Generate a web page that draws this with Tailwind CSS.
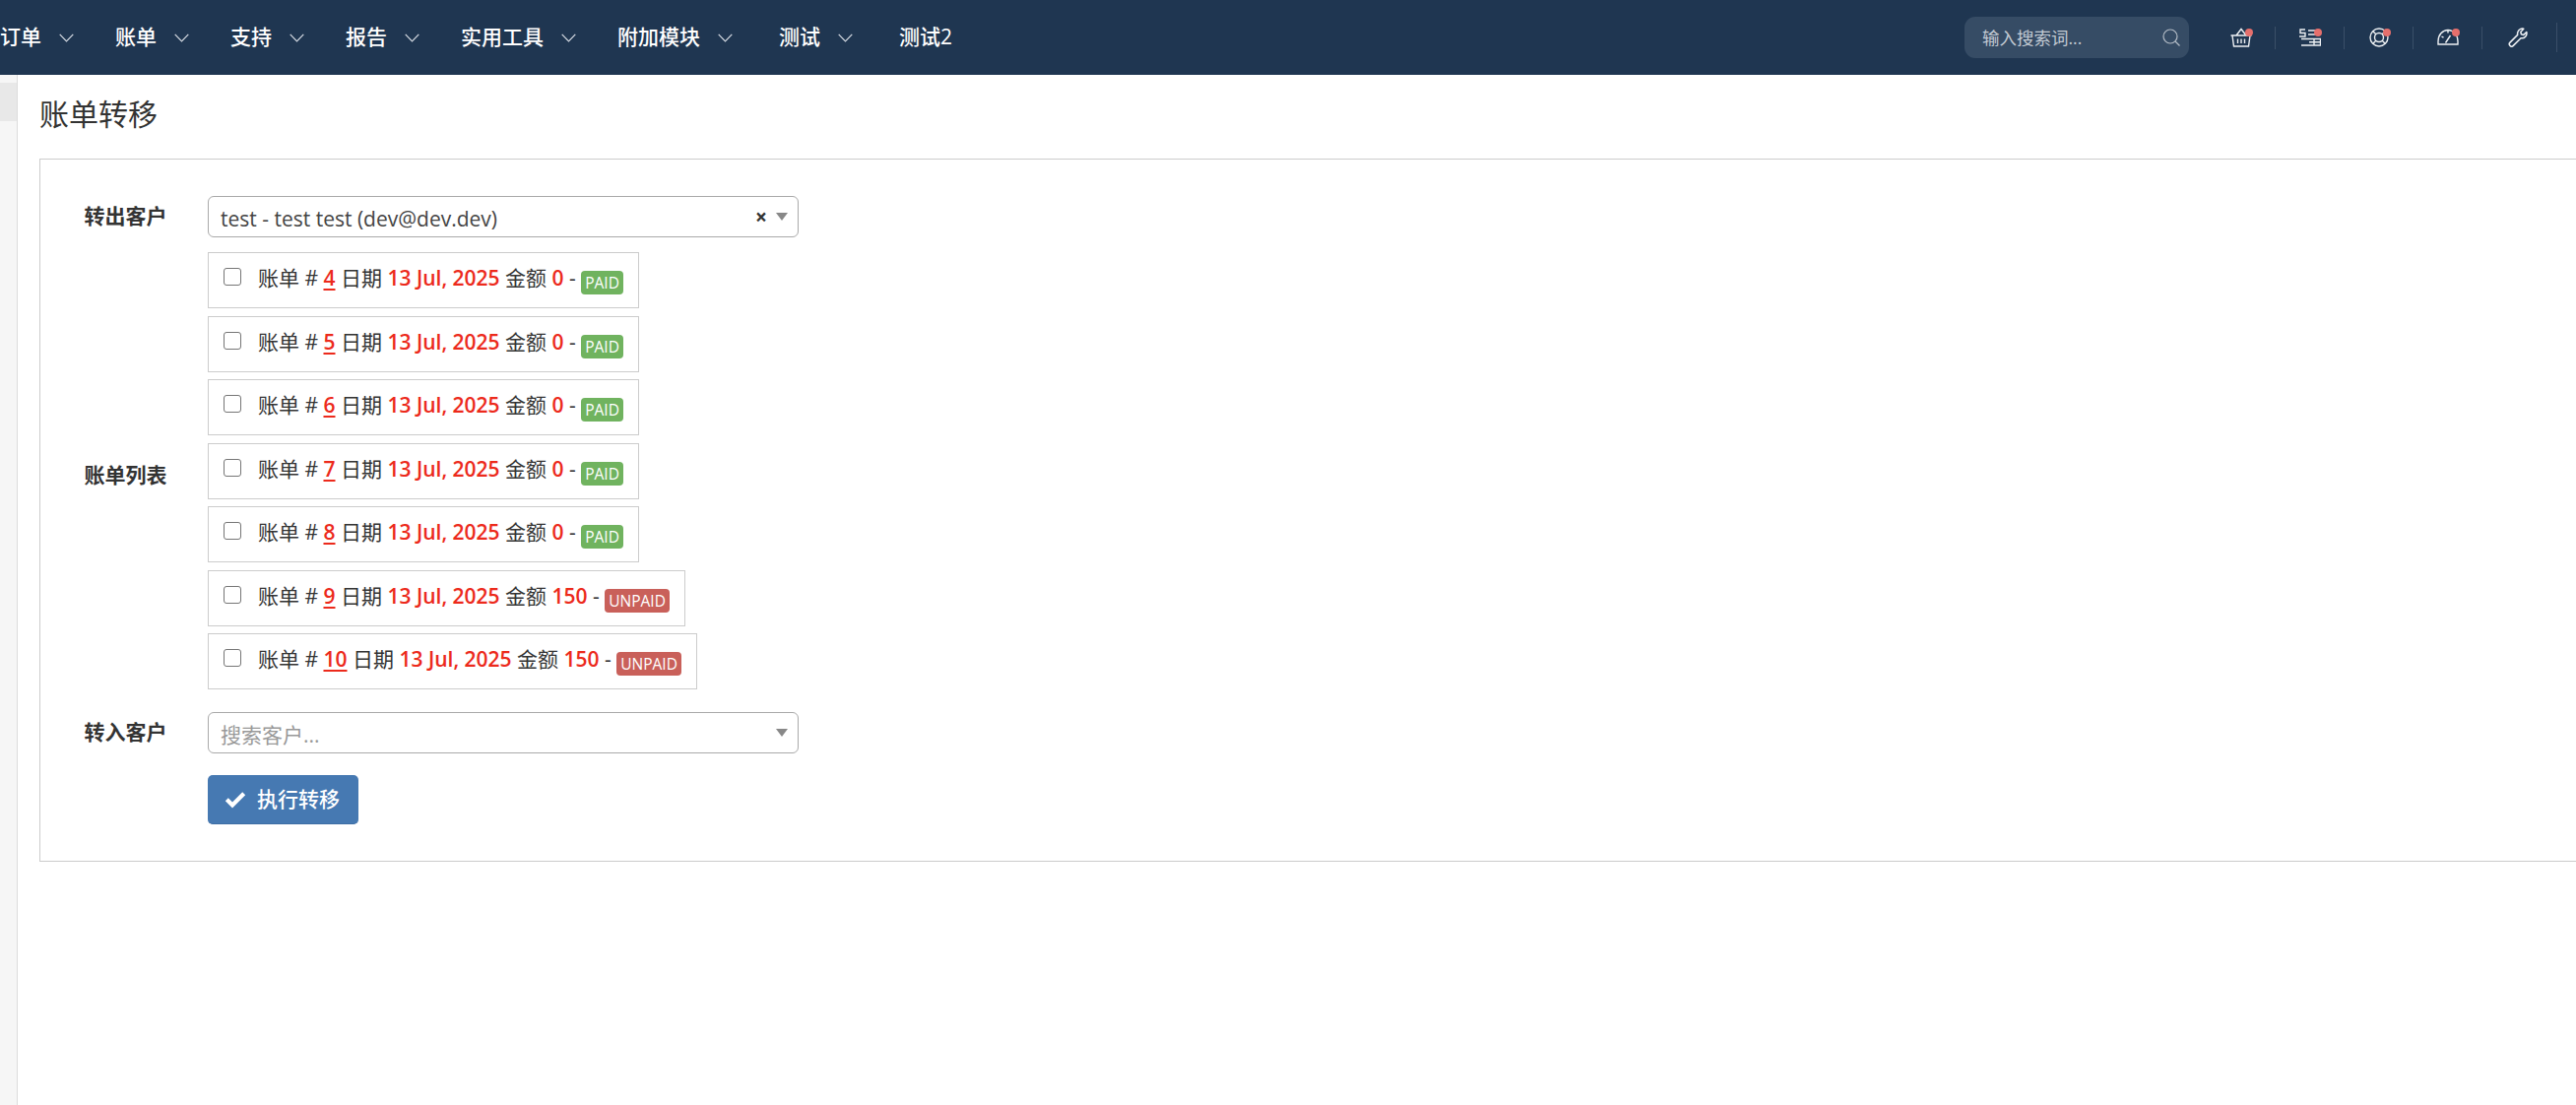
<!DOCTYPE html>
<html lang="zh-CN">

<head>
    <meta charset="UTF-8">
    <meta name="viewport" content="width=device-width, initial-scale=1.0">
    <title>账单转移</title>
    <script src="https://cdn.jsdelivr.net/npm/@tailwindcss/browser@4"></script>
</head>

<body class="bg-white overflow-hidden h-[1122px] text-[#333] text-[21px] font-['Open_Sans','Noto_Sans_CJK_SC',sans-serif]">

    <!-- top nav -->
    <nav class="h-[76px] bg-[#1f3651] flex items-center justify-between text-white">
        <ul class="flex items-center font-medium leading-none -mt-[2px]">
            <li class="flex items-center w-[117px]">订单<svg class="w-[15px] h-[9px] ml-[18px] mt-[3px]" viewBox="0 0 15 9" fill="none" stroke="#d5dbe3" stroke-width="1.2"><path d="M.7.8 7.5 8 14.3.8"/></svg></li>
            <li class="flex items-center w-[117px]">账单<svg class="w-[15px] h-[9px] ml-[18px] mt-[3px]" viewBox="0 0 15 9" fill="none" stroke="#d5dbe3" stroke-width="1.2"><path d="M.7.8 7.5 8 14.3.8"/></svg></li>
            <li class="flex items-center w-[117px]">支持<svg class="w-[15px] h-[9px] ml-[18px] mt-[3px]" viewBox="0 0 15 9" fill="none" stroke="#d5dbe3" stroke-width="1.2"><path d="M.7.8 7.5 8 14.3.8"/></svg></li>
            <li class="flex items-center w-[117px]">报告<svg class="w-[15px] h-[9px] ml-[18px] mt-[3px]" viewBox="0 0 15 9" fill="none" stroke="#d5dbe3" stroke-width="1.2"><path d="M.7.8 7.5 8 14.3.8"/></svg></li>
            <li class="flex items-center w-[159px]">实用工具<svg class="w-[15px] h-[9px] ml-[18px] mt-[3px]" viewBox="0 0 15 9" fill="none" stroke="#d5dbe3" stroke-width="1.2"><path d="M.7.8 7.5 8 14.3.8"/></svg></li>
            <li class="flex items-center w-[164px]">附加模块<svg class="w-[15px] h-[9px] ml-[18px] mt-[3px]" viewBox="0 0 15 9" fill="none" stroke="#d5dbe3" stroke-width="1.2"><path d="M.7.8 7.5 8 14.3.8"/></svg></li>
            <li class="flex items-center w-[122px]">测试<svg class="w-[15px] h-[9px] ml-[18px] mt-[3px]" viewBox="0 0 15 9" fill="none" stroke="#d5dbe3" stroke-width="1.2"><path d="M.7.8 7.5 8 14.3.8"/></svg></li>
            <li>测试2</li>
        </ul>

        <div class="flex items-center">
            <div class="w-[228px] h-[42px] rounded-[11px] bg-[#364c65] flex items-center justify-between pl-[18px] pr-[9px] mr-[18px] text-[17.500px] text-[#c3cad3]">
                <span>输入搜索词...</span>
                <svg class="w-[18px] h-[18px]" viewBox="0 0 18 18" fill="none" stroke="#b4bcc6" stroke-width="1.2"><circle cx="8" cy="8" r="7"/><path d="m13 13 4.500 4.500"/></svg>
            </div>

            <!-- basket -->
            <div class="relative w-[70px] h-[23px] flex items-center justify-center border-r border-[#3a4f68]">
                <svg class="w-[22px] h-[20px]" viewBox="0 0 22 20" fill="none" stroke="#eef1f4" stroke-width="1.400"><path d="M.5 8h21M2 8l1.500 11h15L20 8M6 8l5-6.500L16 8M7.500 11.500v4.500M11 11.500v4.500M14.500 11.500v4.500"/></svg>
                <span class="absolute left-[39px] top-[2px] w-[8px] h-[8px] rounded-full bg-[#e56f6c]"></span>
            </div>
            <!-- billing -->
            <div class="relative w-[70px] h-[23px] flex items-center justify-center border-r border-[#3a4f68]">
                <svg class="w-[22px] h-[18px]" viewBox="0 0 22 18" fill="none" stroke="#eef1f4" stroke-width="1.400"><path d="M9 2h10M9 6h9M6 1H1v3.500h5V8H0M2 10.500h19.500v6.500H2M10 13.700h11.500M15 10.500V17"/></svg>
                <span class="absolute left-[39px] top-[2px] w-[8px] h-[8px] rounded-full bg-[#e56f6c]"></span>
            </div>
            <!-- support -->
            <div class="relative w-[70px] h-[23px] flex items-center justify-center border-r border-[#3a4f68]">
                <svg class="w-[20px] h-[20px]" viewBox="0 0 20 20" fill="none" stroke="#eef1f4" stroke-width="1.400"><circle cx="10" cy="10" r="9"/><circle cx="10" cy="10" r="4.500"/><path d="m3.600 3.600 3.200 3.200M16.400 3.600l-3.200 3.200M3.600 16.400l3.200-3.200M16.400 16.400l-3.200-3.200"/></svg>
                <span class="absolute left-[39px] top-[2px] w-[8px] h-[8px] rounded-full bg-[#e56f6c]"></span>
            </div>
            <!-- gauge -->
            <div class="relative w-[70px] h-[23px] flex items-center justify-center border-r border-[#3a4f68]">
                <svg class="w-[22px] h-[18px]" viewBox="0 0 22 18" fill="none" stroke="#eef1f4" stroke-width="1.400"><path d="M1 16v-3C1 6.500 5.500 1.500 11 1.500S21 6.500 21 13v3ZM11 1.500v3M4.500 8l2 1.200M8.500 14.500l5-7.500"/></svg>
                <span class="absolute left-[39px] top-[2px] w-[8px] h-[8px] rounded-full bg-[#e56f6c]"></span>
            </div>
            <!-- wrench -->
            <div class="w-[76px] h-[30px] flex items-center justify-center border-r border-[#3a4f68] mr-[19px]">
                <svg class="w-[20px] h-[20px] -ml-[4px]" viewBox="0 0 20 20" fill="none" stroke="#eef1f4" stroke-width="1.500" stroke-linejoin="round"><path d="M18.800 4.500c.9 3.300-2 7-5.800 6.200l-7.700 7.700c-.9.9-2.400.9-3.300 0s-.9-2.400 0-3.300L9.700 7.400C8.900 3.500 12.300.4 15.800 1.300l-3 3.100.6 2.400 2.400.6Z"/></svg>
            </div>
        </div>
    </nav>

    <div class="flex h-[1046px]">
        <!-- sidebar strip -->
        <aside class="w-[18px] shrink-0 bg-[#f6f6f6] border-r border-[#dcdcdc] pt-[8px]">
            <div class="h-[39px] bg-[#e8e8e8]"></div>
        </aside>

        <main class="pl-[22px] w-[2700px] shrink-0">
            <h1 class="h-[85px] pt-[20px] text-[30px] leading-[40px] text-[#333]">账单转移</h1>

            <form class="border border-[#cccccc] pt-[37px] pb-[37px] pl-[170px] flex flex-col">
                <div class="flex items-center h-[42px]">
                    <label class="-ml-[125.500px] w-[125.500px] font-bold">转出客户</label>
                    <div class="w-[600px] h-[42px] rounded-[6px] border border-[#aaaaaa] flex items-center justify-between pl-[12px] pr-[10px]">
                        <span class="text-[#444] pt-[6px]">test - test test (dev@dev.dev)</span>
                        <span class="flex items-center gap-[9px]">
                            <span class="font-bold text-[#333] leading-none">×</span>
                            <span class="w-0 h-0 border-x-[6px] border-x-transparent border-t-[8px] border-t-[#888888]"></span>
                        </span>
                    </div>
                </div>

                <div class="flex items-center mt-[15px]">
                    <label class="-ml-[125.500px] w-[125.500px] font-bold pt-[10px]">账单列表</label>
                    <div class="flex flex-col items-start gap-[7.500px]">
                        <div class="h-[57px] border border-[#cccccc] flex items-start pl-[15px] pr-[15px] pt-[15px]">
                            <input type="checkbox" class="appearance-none w-[18px] h-[18px] mr-[17px] border border-[#767676] rounded-[3px] bg-white">
                            <span class="leading-[24px] -mt-[2px]">账单 # <a class="text-[#ec2a1c] font-semibold underline underline-offset-[3px]">4</a> 日期 <span class="text-[#ec2a1c] font-semibold">13 Jul, 2025</span> 金额 <span class="text-[#ec2a1c] font-semibold">0</span> - <span class="inline-block align-[-3px] h-[24px] leading-[24px] px-[4px] rounded-[4px] bg-[#70b35f] text-white text-[15.500px]">PAID</span></span>
                        </div>
                        <div class="h-[57px] border border-[#cccccc] flex items-start pl-[15px] pr-[15px] pt-[15px]">
                            <input type="checkbox" class="appearance-none w-[18px] h-[18px] mr-[17px] border border-[#767676] rounded-[3px] bg-white">
                            <span class="leading-[24px] -mt-[2px]">账单 # <a class="text-[#ec2a1c] font-semibold underline underline-offset-[3px]">5</a> 日期 <span class="text-[#ec2a1c] font-semibold">13 Jul, 2025</span> 金额 <span class="text-[#ec2a1c] font-semibold">0</span> - <span class="inline-block align-[-3px] h-[24px] leading-[24px] px-[4px] rounded-[4px] bg-[#70b35f] text-white text-[15.500px]">PAID</span></span>
                        </div>
                        <div class="h-[57px] border border-[#cccccc] flex items-start pl-[15px] pr-[15px] pt-[15px]">
                            <input type="checkbox" class="appearance-none w-[18px] h-[18px] mr-[17px] border border-[#767676] rounded-[3px] bg-white">
                            <span class="leading-[24px] -mt-[2px]">账单 # <a class="text-[#ec2a1c] font-semibold underline underline-offset-[3px]">6</a> 日期 <span class="text-[#ec2a1c] font-semibold">13 Jul, 2025</span> 金额 <span class="text-[#ec2a1c] font-semibold">0</span> - <span class="inline-block align-[-3px] h-[24px] leading-[24px] px-[4px] rounded-[4px] bg-[#70b35f] text-white text-[15.500px]">PAID</span></span>
                        </div>
                        <div class="h-[57px] border border-[#cccccc] flex items-start pl-[15px] pr-[15px] pt-[15px]">
                            <input type="checkbox" class="appearance-none w-[18px] h-[18px] mr-[17px] border border-[#767676] rounded-[3px] bg-white">
                            <span class="leading-[24px] -mt-[2px]">账单 # <a class="text-[#ec2a1c] font-semibold underline underline-offset-[3px]">7</a> 日期 <span class="text-[#ec2a1c] font-semibold">13 Jul, 2025</span> 金额 <span class="text-[#ec2a1c] font-semibold">0</span> - <span class="inline-block align-[-3px] h-[24px] leading-[24px] px-[4px] rounded-[4px] bg-[#70b35f] text-white text-[15.500px]">PAID</span></span>
                        </div>
                        <div class="h-[57px] border border-[#cccccc] flex items-start pl-[15px] pr-[15px] pt-[15px]">
                            <input type="checkbox" class="appearance-none w-[18px] h-[18px] mr-[17px] border border-[#767676] rounded-[3px] bg-white">
                            <span class="leading-[24px] -mt-[2px]">账单 # <a class="text-[#ec2a1c] font-semibold underline underline-offset-[3px]">8</a> 日期 <span class="text-[#ec2a1c] font-semibold">13 Jul, 2025</span> 金额 <span class="text-[#ec2a1c] font-semibold">0</span> - <span class="inline-block align-[-3px] h-[24px] leading-[24px] px-[4px] rounded-[4px] bg-[#70b35f] text-white text-[15.500px]">PAID</span></span>
                        </div>
                        <div class="h-[57px] border border-[#cccccc] flex items-start pl-[15px] pr-[15px] pt-[15px]">
                            <input type="checkbox" class="appearance-none w-[18px] h-[18px] mr-[17px] border border-[#767676] rounded-[3px] bg-white">
                            <span class="leading-[24px] -mt-[2px]">账单 # <a class="text-[#ec2a1c] font-semibold underline underline-offset-[3px]">9</a> 日期 <span class="text-[#ec2a1c] font-semibold">13 Jul, 2025</span> 金额 <span class="text-[#ec2a1c] font-semibold">150</span> - <span class="inline-block align-[-3px] h-[24px] leading-[24px] px-[4px] rounded-[4px] bg-[#c9605a] text-white text-[15.500px]">UNPAID</span></span>
                        </div>
                        <div class="h-[57px] border border-[#cccccc] flex items-start pl-[15px] pr-[15px] pt-[15px]">
                            <input type="checkbox" class="appearance-none w-[18px] h-[18px] mr-[17px] border border-[#767676] rounded-[3px] bg-white">
                            <span class="leading-[24px] -mt-[2px]">账单 # <a class="text-[#ec2a1c] font-semibold underline underline-offset-[3px]">10</a> 日期 <span class="text-[#ec2a1c] font-semibold">13 Jul, 2025</span> 金额 <span class="text-[#ec2a1c] font-semibold">150</span> - <span class="inline-block align-[-3px] h-[24px] leading-[24px] px-[4px] rounded-[4px] bg-[#c9605a] text-white text-[15.500px]">UNPAID</span></span>
                        </div>
                    </div>
                </div>

                <div class="flex items-center h-[42px] mt-[23px]">
                    <label class="-ml-[125.500px] w-[125.500px] font-bold">转入客户</label>
                    <div class="w-[600px] h-[42px] rounded-[6px] border border-[#aaaaaa] flex items-center justify-between pl-[12px] pr-[10px]">
                        <span class="text-[#999999] pt-[5px]">搜索客户...</span>
                        <span class="w-0 h-0 border-x-[6px] border-x-transparent border-t-[8px] border-t-[#888888]"></span>
                    </div>
                </div>

                <div class="mt-[22px]">
                    <button type="button" class="w-[153px] h-[50px] rounded-[5px] bg-[#4679b2] border-b border-[#3f6ea5] text-white flex items-center pl-[17px] gap-[11px]">
                        <svg class="w-[22px] h-[18px]" viewBox="0 0 22 18" fill="#fff"><path d="M8 17.500.8 10.300l3-3L8 11.500 18.200 1.200l3 3Z"/></svg>
                        <span class="font-medium">执行转移</span>
                    </button>
                </div>
            </form>
        </main>
    </div>
</body>

</html>
